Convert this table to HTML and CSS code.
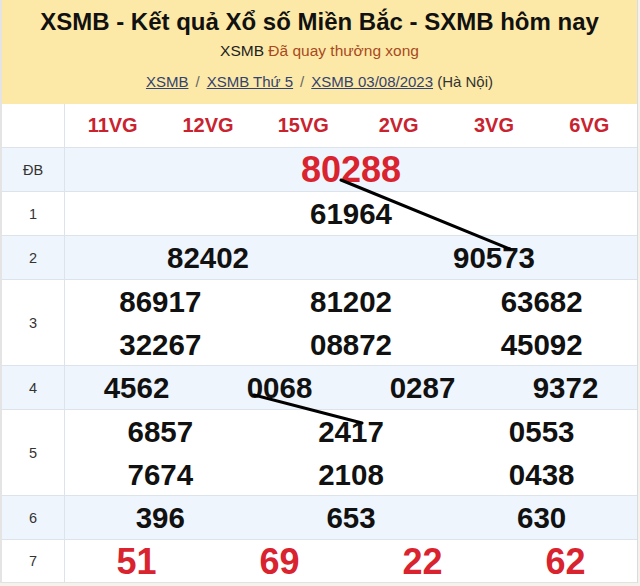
FILE: index.html
```html
<!DOCTYPE html>
<html lang="vi">
<head>
<meta charset="utf-8">
<title>XSMB</title>
<link rel="stylesheet" href="styles.css">
</head>
<body>
<div class="box">
  <header class="head">
    <h1 class="title">XSMB - Kết quả Xổ số Miền Bắc - SXMB hôm nay</h1>
    <p class="status">XSMB <span class="done">Đã quay thưởng xong</span></p>
    <nav class="crumbs"><a href="#">XSMB</a><span class="sep">/</span><a href="#">XSMB Thứ 5</a><span class="sep">/</span><a href="#">XSMB 03/08/2023</a> <span class="place">(Hà Nội)</span></nav>
  </header>
  <div class="results">
    <div class="row">
      <div class="lbl"></div>
      <div class="cells c6 codes"><span>11VG</span><span>12VG</span><span>15VG</span><span>2VG</span><span>3VG</span><span>6VG</span></div>
    </div>
    <div class="row alt">
      <div class="lbl">ĐB</div>
      <div class="cells c1 big red"><span>80288</span></div>
    </div>
    <div class="row">
      <div class="lbl">1</div>
      <div class="cells c1"><span>61964</span></div>
    </div>
    <div class="row alt">
      <div class="lbl">2</div>
      <div class="cells c2"><span>82402</span><span>90573</span></div>
    </div>
    <div class="row tall">
      <div class="lbl">3</div>
      <div class="cells c3"><span>86917</span><span>81202</span><span>63682</span><span>32267</span><span>08872</span><span>45092</span></div>
    </div>
    <div class="row alt">
      <div class="lbl">4</div>
      <div class="cells c4"><span>4562</span><span>0068</span><span>0287</span><span>9372</span></div>
    </div>
    <div class="row tall">
      <div class="lbl">5</div>
      <div class="cells c3"><span>6857</span><span>2417</span><span>0553</span><span>7674</span><span>2108</span><span>0438</span></div>
    </div>
    <div class="row alt">
      <div class="lbl">6</div>
      <div class="cells c3"><span>396</span><span>653</span><span>630</span></div>
    </div>
    <div class="row last">
      <div class="lbl">7</div>
      <div class="cells c4 big red"><span>51</span><span>69</span><span>22</span><span>62</span></div>
    </div>
  </div>
  <svg class="marks" width="640" height="586" viewBox="0 0 640 586" aria-hidden="true">
    <line x1="341" y1="180" x2="510" y2="249"/>
    <line x1="254" y1="395" x2="362" y2="423"/>
  </svg>
</div>
</body>
</html>
```
FILE: styles.css
```css
html, body {
  margin: 0;
  padding: 0;
}
body {
  background: #f4f2ea;
  font-family: "Liberation Sans", Arial, sans-serif;
  color: #111;
  width: 640px;
  height: 586px;
  overflow: hidden;
}
.box {
  position: relative;
  width: 635px;
  background: #fff;
  border-left: 2px solid #e4e4e4;
  border-right: 1px solid #d8dce2;
}
.head {
  background: #fce9a7;
  height: 104px;
  box-sizing: border-box;
  padding-top: 8px;
  text-align: center;
}
.title {
  margin: 0;
  font-size: 24px;
  line-height: 28px;
  font-weight: bold;
  color: #111;
}
.status {
  margin: 5px 0 0;
  font-size: 15.5px;
  line-height: 20px;
  color: #222;
}
.done {
  color: #a84a1e;
}
.crumbs {
  margin-top: 11px;
  font-size: 15px;
  line-height: 20px;
  color: #333;
}
.crumbs a {
  color: #34426e;
  text-decoration: underline;
}
.sep {
  color: #666;
  margin: 0 7px;
}
.results {
  display: flex;
  flex-direction: column;
}
.row {
  display: flex;
  height: 44px;
  box-sizing: border-box;
  border-bottom: 1px solid #dde3ea;
}
.row.tall {
  height: 86px;
}
.row.last {
  height: 43px;
  border-bottom: 1px solid #e2e2e2;
}
.row.alt {
  background: #eef5fc;
}
.lbl {
  width: 62px;
  flex: none;
  border-right: 1px solid #dde3ea;
  display: flex;
  align-items: center;
  justify-content: center;
  font-size: 14.5px;
  color: #333;
}
.cells {
  flex: 1;
  display: grid;
  align-content: center;
  text-align: center;
  font-size: 29.5px;
  font-weight: bold;
  line-height: 43px;
  color: #111;
}
.c1 { grid-template-columns: 1fr; }
.c2 { grid-template-columns: repeat(2, 1fr); }
.c3 { grid-template-columns: repeat(3, 1fr); }
.c4 { grid-template-columns: repeat(4, 1fr); }
.c6 { grid-template-columns: repeat(6, 1fr); }
.codes {
  font-size: 20px;
  color: #c8232f;
}
.big {
  font-size: 36px;
}
.red {
  color: #d9232e;
}
.marks {
  position: absolute;
  left: -2px;
  top: 0;
  pointer-events: none;
}
.marks line {
  stroke: #000;
  stroke-width: 3;
  stroke-linecap: round;
}
```
